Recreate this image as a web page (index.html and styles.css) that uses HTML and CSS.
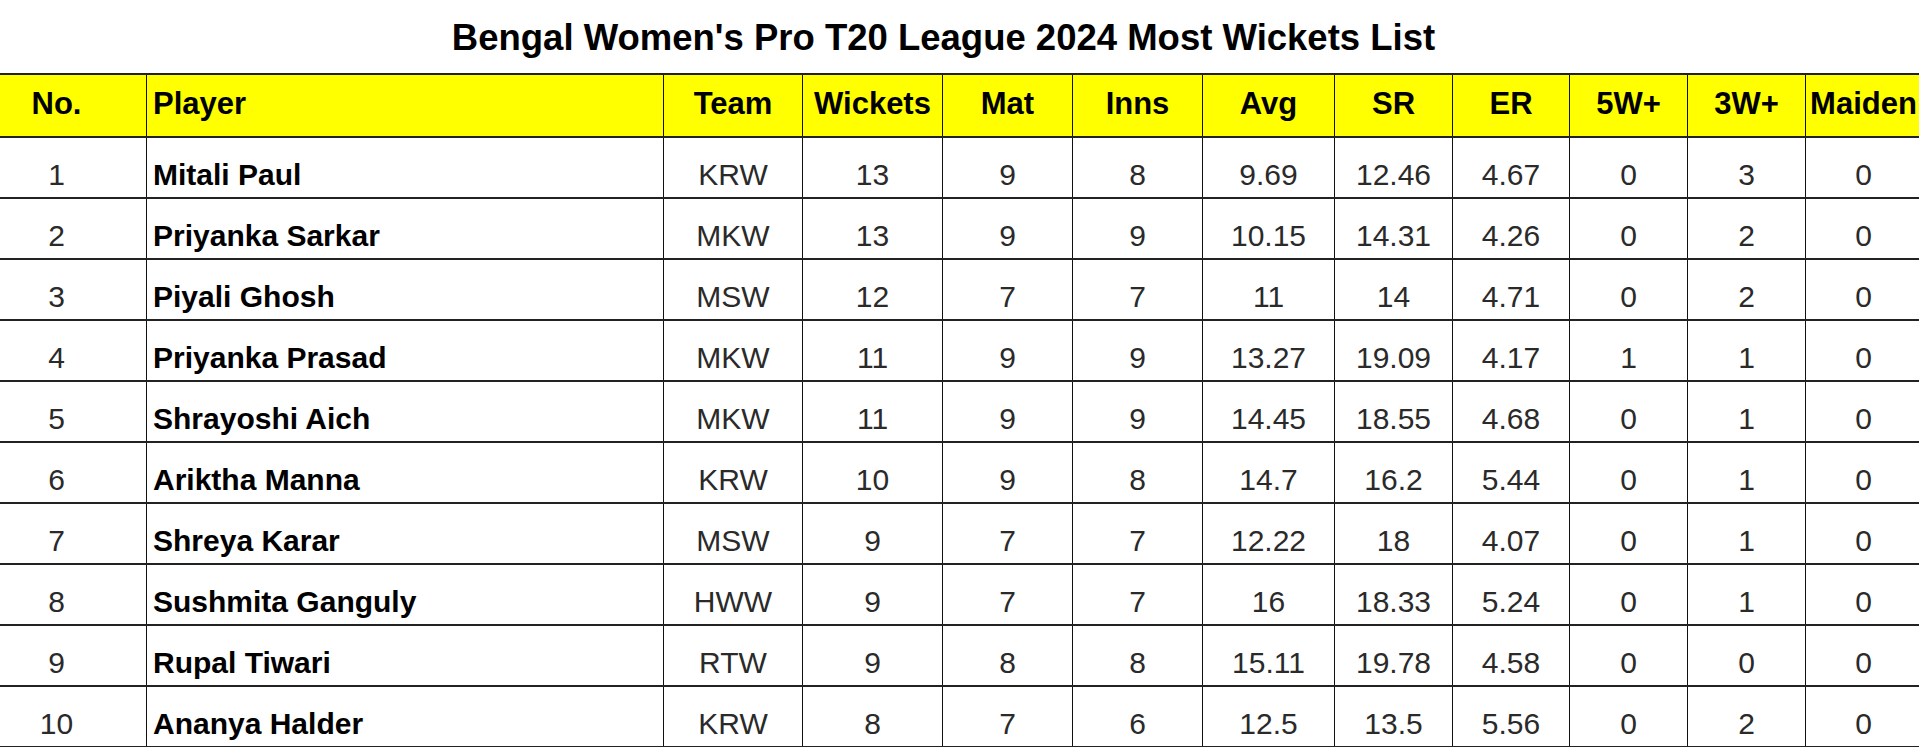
FILE: index.html
```html
<!DOCTYPE html>
<html lang="en">
<head>
<meta charset="utf-8">
<title>Bengal Women's Pro T20 League 2024 Most Wickets List</title>
<link rel="stylesheet" href="styles.css">
</head>
<body>
<div class="page">
  <div class="sheet">
    <h1 class="title">Bengal Women's Pro T20 League 2024 Most Wickets List</h1>
    <table class="stats">
      <colgroup>
        <col class="c-no"><col class="c-player"><col class="c-team"><col class="c-wk">
        <col class="c-mat"><col class="c-inns"><col class="c-avg"><col class="c-sr">
        <col class="c-er"><col class="c-5w"><col class="c-3w"><col class="c-maiden">
      </colgroup>
      <thead>
        <tr><th>No.</th><th class="left">Player</th><th>Team</th><th>Wickets</th><th>Mat</th><th>Inns</th><th>Avg</th><th>SR</th><th>ER</th><th>5W+</th><th>3W+</th><th>Maiden</th></tr>
      </thead>
      <tbody>
        <tr><td>1</td><td class="name">Mitali Paul</td><td>KRW</td><td>13</td><td>9</td><td>8</td><td>9.69</td><td>12.46</td><td>4.67</td><td>0</td><td>3</td><td>0</td></tr>
        <tr><td>2</td><td class="name">Priyanka Sarkar</td><td>MKW</td><td>13</td><td>9</td><td>9</td><td>10.15</td><td>14.31</td><td>4.26</td><td>0</td><td>2</td><td>0</td></tr>
        <tr><td>3</td><td class="name">Piyali Ghosh</td><td>MSW</td><td>12</td><td>7</td><td>7</td><td>11</td><td>14</td><td>4.71</td><td>0</td><td>2</td><td>0</td></tr>
        <tr><td>4</td><td class="name">Priyanka Prasad</td><td>MKW</td><td>11</td><td>9</td><td>9</td><td>13.27</td><td>19.09</td><td>4.17</td><td>1</td><td>1</td><td>0</td></tr>
        <tr><td>5</td><td class="name">Shrayoshi Aich</td><td>MKW</td><td>11</td><td>9</td><td>9</td><td>14.45</td><td>18.55</td><td>4.68</td><td>0</td><td>1</td><td>0</td></tr>
        <tr><td>6</td><td class="name">Ariktha Manna</td><td>KRW</td><td>10</td><td>9</td><td>8</td><td>14.7</td><td>16.2</td><td>5.44</td><td>0</td><td>1</td><td>0</td></tr>
        <tr><td>7</td><td class="name">Shreya Karar</td><td>MSW</td><td>9</td><td>7</td><td>7</td><td>12.22</td><td>18</td><td>4.07</td><td>0</td><td>1</td><td>0</td></tr>
        <tr><td>8</td><td class="name">Sushmita Ganguly</td><td>HWW</td><td>9</td><td>7</td><td>7</td><td>16</td><td>18.33</td><td>5.24</td><td>0</td><td>1</td><td>0</td></tr>
        <tr><td>9</td><td class="name">Rupal Tiwari</td><td>RTW</td><td>9</td><td>8</td><td>8</td><td>15.11</td><td>19.78</td><td>4.58</td><td>0</td><td>0</td><td>0</td></tr>
        <tr><td>10</td><td class="name">Ananya Halder</td><td>KRW</td><td>8</td><td>7</td><td>6</td><td>12.5</td><td>13.5</td><td>5.56</td><td>0</td><td>2</td><td>0</td></tr>
      </tbody>
    </table>
  </div>
</div>
</body>
</html>
```
FILE: styles.css
```css
html, body {
  margin: 0;
  padding: 0;
  background: #ffffff;
  overflow: hidden;
}

.page {
  width: 1919px;
  height: 747px;
  overflow: hidden;
  font-family: "Liberation Sans", Arial, sans-serif;
}

.sheet {
  width: 1955px;
  margin-left: -34px;
}

.title {
  margin: 18px 0 15px;
  font-size: 36.5px;
  line-height: 40px;
  font-weight: bold;
  color: #000;
  text-align: center;
}

.stats {
  width: 1955px;
  table-layout: fixed;
  border-collapse: collapse;
  font-size: 30px;
  line-height: 34px;
}

.c-no { width: 180px; }
.c-player { width: 517px; }
.c-team { width: 139px; }
.c-wk { width: 140px; }
.c-mat { width: 130px; }
.c-inns { width: 130px; }
.c-avg { width: 132px; }
.c-sr { width: 118px; }
.c-er { width: 117px; }
.c-5w { width: 118px; }
.c-3w { width: 118px; }
.c-maiden { width: 116px; }

.stats th,
.stats td {
  border-left: 1px solid #111;
  border-right: 1px solid #111;
  border-top: 2px solid #222;
  border-bottom: 2px solid #222;
  text-align: center;
  white-space: nowrap;
  overflow: visible;
}

.stats th {
  background: #ffff00;
  color: #000;
  font-size: 31px;
  font-weight: bold;
  padding: 12px 4px 15px;
}

.stats td {
  background: #fff;
  color: #2a2a2a;
  font-weight: normal;
  padding: 20px 5px 5px;
}

.stats th.left,
.stats td.name {
  text-align: left;
  padding-left: 6px;
}

.stats td.name {
  color: #000;
  font-weight: bold;
}
```
